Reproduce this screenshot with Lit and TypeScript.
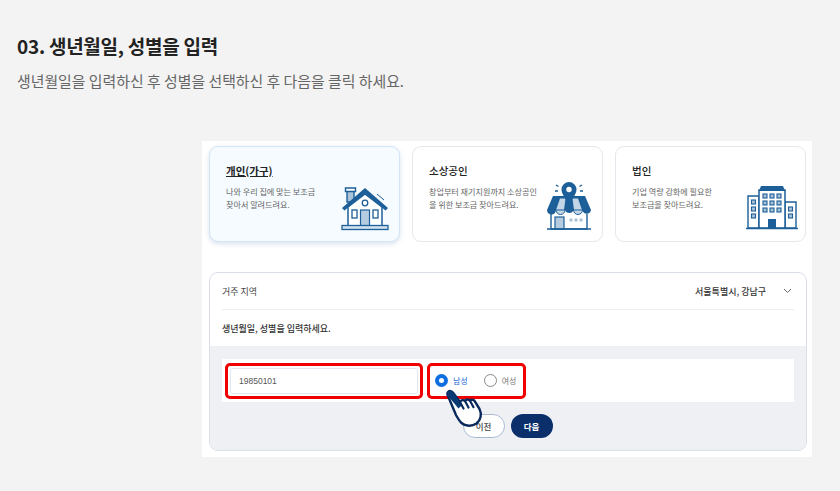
import { LitElement, html, css, svg } from "lit";
import { customElement } from "lit/decorators.js";

const houseIcon = svg`
  <svg class="icon house" width="48" height="46" viewBox="0 0 48 46" fill="none">
    <path d="M6 4h7v12H6z" fill="#a9c4da" stroke="#1d5f99" stroke-width="1.400"/>
    <path d="M4.500 2h10v3.500h-10z" fill="#fff" stroke="#1d5f99" stroke-width="1.400"/>
    <path d="M7 21 24 8l17 13v19H7z" fill="#fff" stroke="#1d5f99" stroke-width="1.500"/>
    <path d="M1 22 24 2l23 20-2.500 2.500L24 7.500 3.500 24.500z" fill="#1d5f99"/>
    <path d="M36 8l7 6" stroke="#1d5f99" stroke-width="1"/>
    <circle cx="24" cy="17" r="2.800" fill="#fff" stroke="#1d5f99" stroke-width="1.300"/>
    <rect x="19.500" y="24" width="9" height="16" fill="#b5cce0" stroke="#1d5f99" stroke-width="1.200"/>
    <rect x="11" y="24" width="5" height="8" fill="#fff" stroke="#1d5f99" stroke-width="1.300"/>
    <rect x="32" y="24" width="5" height="8" fill="#fff" stroke="#1d5f99" stroke-width="1.300"/>
    <rect x="1" y="39.500" width="46" height="4" fill="#cfe0ee" stroke="#1d5f99" stroke-width="1.300"/>
  </svg>`;

const shopIcon = svg`
  <svg class="icon shop" width="46" height="50" viewBox="0 0 46 50" fill="none">
    <path d="M5 33v15h36V33" fill="#fff" stroke="#1d5f99" stroke-width="1.400"/>
    <path d="M7 15h32l6 14H1z" fill="#1d5f99"/>
    <path d="M14 17.500 10 29h8l1.500-11.500zM32 17.500 36 29h-8l-1.500-11.500z" fill="#c3d6e6"/>
    <path d="M1 29a4.500 4.500 0 0 0 9 0zM19 29a4.500 4.500 0 0 0 8.500 0zM36.500 29a4.300 4.300 0 0 0 8.500 0z" fill="#1d5f99"/>
    <path d="M10 29a4.500 4.500 0 0 0 9 0zM27.500 29a4.500 4.500 0 0 0 9 0z" fill="#c3d6e6" stroke="#1d5f99" stroke-width="1"/>
    <path d="M23 1a7.500 7.500 0 0 1 7.500 7.500C30.500 13 26 18 23 24c-3-6-7.500-11-7.500-15.500A7.500 7.500 0 0 1 23 1z" fill="#1d5f99"/>
    <circle cx="23" cy="8.500" r="2.700" fill="#fff"/>
    <path d="M10 4l2.500 1.500M9 10h3M36 4l-2.500 1.500M37 10h-3" stroke="#1d5f99" stroke-width="1.400"/>
    <rect x="9" y="36" width="9" height="12" fill="#b5cce0" stroke="#1d5f99" stroke-width="1.200"/>
    <circle cx="25" cy="39" r="1.700" fill="#a9c2d8"/>
    <circle cx="30" cy="39" r="1.700" fill="#a9c2d8"/>
    <circle cx="35" cy="39" r="1.700" fill="#a9c2d8"/>
    <path d="M1 48h44" stroke="#1d5f99" stroke-width="1.600"/>
  </svg>`;

const buildingIcon = svg`
  <svg class="icon building" width="54" height="46" viewBox="0 0 54 46" fill="none">
    <path d="M3 12h11v32H3zM40 18h11v26H40z" fill="#fff" stroke="#1d5f99" stroke-width="1.400"/>
    <path d="M14 6h26v38H14z" fill="#fff" stroke="#1d5f99" stroke-width="1.500"/>
    <path d="M16 2h22l2 5H14z" fill="#1d5f99"/>
    <g fill="#a9c2d8" stroke="#1d5f99" stroke-width="1.100">
      <rect x="18" y="10" width="4" height="4"/><rect x="25" y="10" width="4" height="4"/><rect x="32" y="10" width="4" height="4"/>
      <rect x="18" y="17" width="4" height="4"/><rect x="25" y="17" width="4" height="4"/><rect x="32" y="17" width="4" height="4"/>
      <rect x="18" y="24" width="4" height="4"/><rect x="25" y="24" width="4" height="4"/><rect x="32" y="24" width="4" height="4"/>
      <rect x="6.500" y="16" width="4" height="4"/><rect x="6.500" y="23" width="4" height="4"/><rect x="6.500" y="30" width="4" height="4"/>
      <rect x="43.500" y="23" width="4" height="4"/><rect x="43.500" y="30" width="4" height="4"/>
    </g>
    <path d="M23 44V35h8v9z" fill="#1d5f99"/>
    <path d="M1 44.500h52" stroke="#1d5f99" stroke-width="1.700"/>
  </svg>`;

const handIcon = svg`
  <svg width="40" height="40" viewBox="0 0 40 40" fill="none">
    <path d="M3 3c1.600-1.600 3.800-1 5 .6l7 9.400c1-2 3.400-2.500 5-1 1-1.800 3.800-2 5-.3 1.200-1.400 3.600-1.200 4.700.5l4.800 7.800c2.500 5 1.500 11-3 14.500-4.500 3.200-11 3-15-.5-2.500-2.200-4-5.500-5.500-8L3 7c-.7-1.300-.9-3 0-4z"
      fill="#fff" stroke="#0a2a5e" stroke-width="2.400" stroke-linejoin="round"/>
    <path d="M3 3c1.600-1.600 3.800-1 5 .6l9 12.400-3.500 3.500L3 7c-.7-1.300-.9-3 0-4z" fill="#0a3a74"/>
    <path d="M15 13l3.500 6.500M20 12l3.500 6.500M25 11.700l3.500 6.500" stroke="#0a2a5e" stroke-width="2.200" stroke-linecap="round"/>
  </svg>`;

@customElement("app-root")
export class AppRoot extends LitElement {
  static styles = css`
    :host {
      display: block;
      height: 491px;
      background: #f3f3f3;
      overflow: hidden;
      font-family: "Noto Sans CJK KR", "Noto Sans", sans-serif;
      color: #222;
    }
    .intro {
      padding: 33px 0 0 17px;
    }
    h1 {
      margin: 0;
      font-size: 19px;
      line-height: 25px;
      font-weight: 600;
      color: #222;
      letter-spacing: -0.25px;
    }
    .lead {
      margin: 12px 0 0;
      font-size: 14.900px;
      line-height: 22px;
      color: #666;
    }
    .shot {
      box-sizing: border-box;
      width: 610px;
      height: 316px;
      margin: 49px 0 0 202px;
      padding: 5px 5px 6px 7px;
      background: #fff;
    }
    .cards {
      display: grid;
      grid-template-columns: repeat(3, 191px);
      gap: 12px;
    }
    .card {
      position: relative;
      box-sizing: border-box;
      height: 96px;
      padding: 15px 0 0 16px;
      background: #fff;
      border: 1px solid #e6e7ec;
      border-radius: 9px;
    }
    .card.active {
      background: #f5fbff;
      border-color: #d3e4f6;
      box-shadow: 0 2px 5px rgba(70, 110, 170, 0.2);
    }
    .card h2 {
      margin: 0;
      font-size: 10.500px;
      line-height: 18px;
      font-weight: 500;
      color: #222;
    }
    .card.active h2 {
      font-weight: 700;
      text-decoration: underline;
    }
    .card p {
      margin: 5px 0 0;
      font-size: 8.100px;
      line-height: 13px;
      color: #666;
    }
    .icon {
      position: absolute;
    }
    .icon.house {
      left: 131px;
      top: 39px;
    }
    .icon.shop {
      left: 133px;
      top: 34px;
    }
    .icon.building {
      left: 129px;
      top: 37px;
    }
    .panel {
      box-sizing: border-box;
      width: 598px;
      height: 179px;
      margin-top: 30px;
      background: #fff;
      border: 1px solid #d9deea;
      border-radius: 9px;
      overflow: hidden;
    }
    .region {
      display: flex;
      justify-content: space-between;
      align-items: center;
      height: 36px;
      margin: 0 12px;
      border-bottom: 1px solid #eeeff3;
      font-size: 9px;
      color: #444;
    }
    .region strong {
      flex: 1;
      text-align: right;
      font-weight: 500;
      color: #333;
      font-size: 9px;
      margin-right: 1px;
    }
    .region svg {
      margin: 0 2px 0 16px;
    }
    .prompt {
      height: 36px;
      margin: 0 12px;
      display: flex;
      align-items: center;
      font-size: 9px;
      font-weight: 500;
      color: #333;
    }
    .form {
      position: relative;
      height: 106px;
      padding: 13px 12px 0;
      background: #eef0f4;
    }
    .row {
      display: flex;
      align-items: center;
      gap: 4px;
      height: 43px;
      padding-left: 3px;
      background: #fff;
    }
    .mark {
      box-sizing: border-box;
      height: 36px;
      border: 3px solid #f00000;
      border-radius: 5px;
    }
    .mark.date {
      width: 198px;
      padding: 2px;
    }
    .date-value {
      box-sizing: border-box;
      height: 100%;
      padding-left: 8px;
      display: flex;
      align-items: center;
      border: 1px solid #e6e7ec;
      border-radius: 3px;
      font-family: "Liberation Sans", sans-serif;
      font-size: 8.500px;
      color: #555;
    }
    .mark.gender {
      width: 99px;
      display: flex;
      align-items: center;
      gap: 16px;
      padding-left: 5px;
    }
    .radio {
      display: flex;
      align-items: center;
      gap: 5px;
      font-size: 8px;
      color: #777;
    }
    .radio.on {
      color: #1668d8;
    }
    .dot {
      box-sizing: border-box;
      width: 13px;
      height: 13px;
      border: 1px solid #888;
      border-radius: 50%;
      background: #fff;
    }
    .on .dot {
      border: 4px solid #0f6fe0;
    }
    .actions {
      display: flex;
      justify-content: center;
      gap: 6px;
      margin-top: 12px;
      padding-right: 1px;
    }
    button {
      box-sizing: border-box;
      width: 42px;
      height: 24px;
      padding: 0;
      border-radius: 12px;
      font: 500 8.500px "Noto Sans CJK KR", sans-serif;
    }
    .prev {
      background: #fff;
      border: 1px solid #a9bbd4;
      color: #444;
    }
    .next {
      background: #0a2f6b;
      border: 0;
      color: #fff;
      font-weight: 700;
    }
    .hand {
      position: absolute;
      left: 235px;
      top: 43px;
      line-height: 0;
    }
  `;

  render() {
    return html`
      <div class="intro">
        <h1>03. 생년월일, 성별을 입력</h1>
        <p class="lead">생년월일을 입력하신 후 성별을 선택하신 후 다음을 클릭 하세요.</p>
      </div>
      <div class="shot">
        <div class="cards">
          <div class="card active">
            <h2>개인(가구)</h2>
            <p>나와 우리 집에 맞는 보조금<br />찾아서 알려드려요.</p>
            ${houseIcon}
          </div>
          <div class="card">
            <h2>소상공인</h2>
            <p>창업부터 재기지원까지 소상공인<br />을 위한 보조금 찾아드려요.</p>
            ${shopIcon}
          </div>
          <div class="card">
            <h2>법인</h2>
            <p>기업 역량 강화에 필요한<br />보조금을 찾아드려요.</p>
            ${buildingIcon}
          </div>
        </div>
        <div class="panel">
          <div class="region">
            <span>거주 지역</span>
            <strong>서울특별시, 강남구</strong>
            <svg width="9" height="6" viewBox="0 0 9 6" fill="none">
              <path d="M1 1l3.500 3.500L8 1" stroke="#666" stroke-width="1" />
            </svg>
          </div>
          <div class="prompt">생년월일, 성별을 입력하세요.</div>
          <div class="form">
            <div class="row">
              <div class="mark date"><div class="date-value">19850101</div></div>
              <div class="mark gender">
                <span class="radio on"><span class="dot"></span>남성</span>
                <span class="radio"><span class="dot"></span>여성</span>
              </div>
            </div>
            <div class="actions">
              <button class="prev">이전</button>
              <button class="next">다음</button>
            </div>
            <div class="hand">${handIcon}</div>
          </div>
        </div>
      </div>
    `;
  }
}
